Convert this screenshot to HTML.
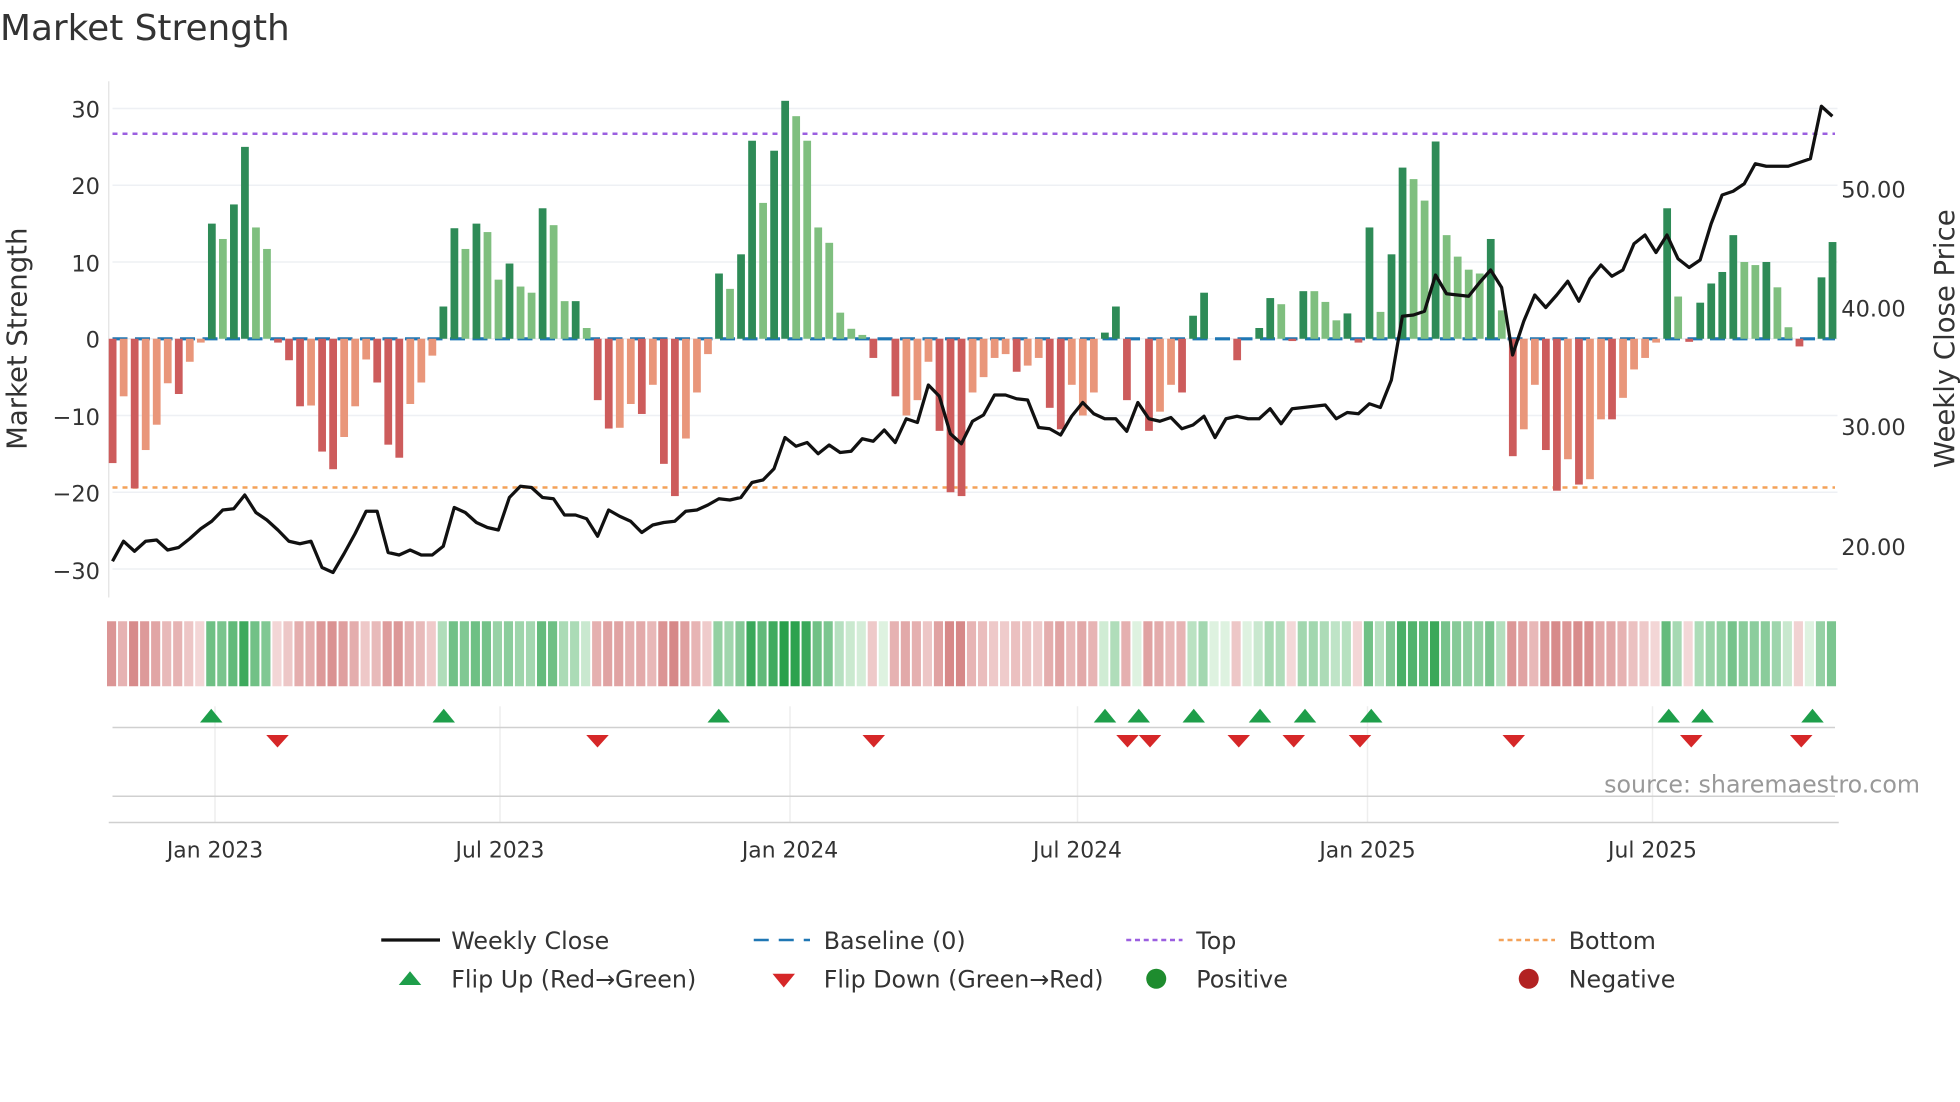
<!DOCTYPE html>
<html><head><meta charset="utf-8"><style>
html,body{margin:0;padding:0;background:#fff;}
svg{display:block;font-family:"DejaVu Sans","Liberation Sans",sans-serif;}
</style></head><body>
<svg id="s" width="1960" height="1102" viewBox="0 0 1568 881.6" xmlns="http://www.w3.org/2000/svg">
<rect width="1568" height="882" fill="#fff"/>
<text x="0" y="32" font-size="28.7" fill="#333">Market Strength</text>
<g id="grid"></g>
<line x1="87" y1="65" x2="87" y2="478" stroke="#e3e3e3" stroke-width="1"/>
<line x1="90" y1="107" x2="1468" y2="107" stroke="#9b5fe0" stroke-width="2" stroke-dasharray="4,4"/>
<line x1="90" y1="390" x2="1468" y2="390" stroke="#f4a259" stroke-width="2" stroke-dasharray="4,4"/>
<line x1="90" y1="271" x2="1468" y2="271" stroke="#1f77b4" stroke-width="2.5" stroke-dasharray="12,6"/>
<g id="bars"></g>
<polyline id="price" fill="none" stroke="#111" stroke-width="2.6" stroke-linejoin="round"/>
<g id="heat"></g>
<g id="marks"></g>
<g font-size="18" fill="#333" text-anchor="end">
<text x="80" y="94">30</text><text x="80" y="155">20</text><text x="80" y="217">10</text><text x="80" y="278">0</text>
<text x="80" y="340">−10</text><text x="80" y="401">−20</text><text x="80" y="463">−30</text>
</g>
<g font-size="18" fill="#333">
<text x="1473" y="158">50.00</text><text x="1473" y="253">40.00</text><text x="1473" y="348">30.00</text><text x="1473" y="444">20.00</text>
</g>
<text transform="translate(21,271) rotate(-90)" text-anchor="middle" font-size="22" fill="#333">Market Strength</text>
<text transform="translate(1563,271) rotate(-90)" text-anchor="middle" font-size="22" fill="#333">Weekly Close Price</text>
<g font-size="17.5" fill="#333" text-anchor="middle">
<text x="172" y="686">Jan 2023</text><text x="400" y="686">Jul 2023</text><text x="632" y="686">Jan 2024</text>
<text x="862" y="686">Jul 2024</text><text x="1094" y="686">Jan 2025</text><text x="1322" y="686">Jul 2025</text>
</g>
<text x="1536" y="634" font-size="19" fill="#999" text-anchor="end">source: sharemaestro.com</text>
<g font-size="19" fill="#333">
<line x1="305" y1="752" x2="352" y2="752" stroke="#111" stroke-width="2.6"/>
<text x="361" y="759">Weekly Close</text>
<line x1="603" y1="752" x2="648" y2="752" stroke="#1f77b4" stroke-width="2" stroke-dasharray="12,8"/>
<text x="659" y="759">Baseline (0)</text>
<line x1="901" y1="752" x2="946" y2="752" stroke="#9b5fe0" stroke-width="2" stroke-dasharray="4,3"/>
<text x="957" y="759">Top</text>
<line x1="1199" y1="752" x2="1244" y2="752" stroke="#f4a259" stroke-width="2" stroke-dasharray="4,3"/>
<text x="1255" y="759">Bottom</text>
<polygon points="319,788 337,788 328,777" fill="#1e9e4a"/>
<text x="361" y="790">Flip Up (Red→Green)</text>
<polygon points="618,779 636,779 627,790" fill="#d62728"/>
<text x="659" y="790">Flip Down (Green→Red)</text>
<circle cx="925" cy="783" r="8" fill="#1e8c2e"/>
<text x="957" y="790">Positive</text>
<circle cx="1223" cy="783" r="8" fill="#b22222"/>
<text x="1255" y="790">Negative</text>
</g>
</svg>
<script>
var NS="http://www.w3.org/2000/svg";
function el(t,a,p){var e=document.createElementNS(NS,t);for(var k in a)e.setAttribute(k,a[k]);document.getElementById(p).appendChild(e);return e;}
[30,20,10,0,-10,-20,-30].forEach(function(v){var y=271-v*6.14;el("line",{x1:90,x2:1470,y1:y,y2:y,stroke:"#eef0f4","stroke-width":1.2},"grid");});
[172,400,632,862,1094,1322].forEach(function(x){el("line",{x1:x,x2:x,y1:565,y2:658,stroke:"#eeeeee","stroke-width":1.2},"grid");});
el("line",{x1:90,x2:1468,y1:582,y2:582,stroke:"#d0d0d0","stroke-width":1.2},"grid");
el("line",{x1:90,x2:1468,y1:637,y2:637,stroke:"#d0d0d0","stroke-width":1.2},"grid");
el("line",{x1:87,x2:1471,y1:658,y2:658,stroke:"#d0d0d0","stroke-width":1.2},"grid");
var V="-16.2d,-7.5,-19.5d,-14.5,-11.2,-5.8,-7.2d,-3,-0.5,15d,13,17.5d,25d,14.5,11.7,-0.5d,-2.8d,-8.8d,-8.7,-14.7d,-17d,-12.8,-8.8,-2.7,-5.7d,-13.8d,-15.5d,-8.5,-5.7,-2.2,4.2d,14.4d,11.7,15d,13.9,7.7,9.8d,6.8,6,17d,14.8,4.9,4.9d,1.4,-8d,-11.7d,-11.6,-8.5,-9.8d,-6,-16.3d,-20.5d,-13,-7,-2,8.5d,6.5,11d,25.8d,17.7,24.5d,31d,29,25.8,14.5,12.5,3.4,1.3,0.5,-2.5d,0,-7.5d,-10,-8,-3,-12d,-20d,-20.5d,-7,-5,-2.5,-2,-4.3d,-3.5,-2.5,-9d,-11.8d,-6,-10,-7,0.8d,4.2d,-8d,0,-12d,-9.5,-6,-7d,3d,6d,0,0,-2.8d,0,1.4d,5.3d,4.5,-0.3d,6.2d,6.2,4.8,2.4,3.3d,-0.5d,14.5d,3.5,11d,22.3d,20.8,18,25.7d,13.5,10.7,9,8.5,13d,3.7,-15.3d,-11.8,-6,-14.5d,-19.8d,-15.7,-19d,-18.3,-10.5,-10.5d,-7.7,-4,-2.5,-0.5,17d,5.5,-0.4d,4.7d,7.2d,8.7d,13.5d,10,9.6,10d,6.7,1.5,-1d,0,8d,12.6d".split(",");
var P=[449,433,441,433,432,440,438,431,423,417,408,407,396,410,416,424,433,435,433,454,458,443,427,409,409,442,444,440,444,444,437,406,410,418,422,424,398,389,390,398,399,412,412,415,429,408,413,417,426,420,418,417,409,408,404,399,400,398,386,384,375,350,357,354,363,356,362,361,351,353,344,354,335,338,308,317,347,355,337,332,316,316,319,320,342,343,348,333,322,331,335,335,345,322,335,337,334,343,340,333,350,335,333,335,335,327,339,327,326,325,324,335,330,331,323,326,304,253,252,249,220,235,236,237,226,216,230,284,257,236,246,236,225,241,223,212,221,216,195,188,202,188,207,214,208,179,156,153,147,131,133,133,133,130,127,85,93];
var pts=[];
function mix(a,b,t){return "rgb("+[0,1,2].map(function(i){return Math.round(a[i]+(b[i]-a[i])*t);}).join(",")+")";}
V.forEach(function(s,i){
  var d=s.indexOf("d")>=0,v=parseFloat(s),x=90+i*8.82;
  if(v!==0){var y=271-v*6.14;
    var c=v>0?(d?"#2e8b57":"#7fbf7f"):(d?"#cd5c5c":"#e9967a");
    el("rect",{x:x-3,y:Math.min(y,271),width:6.2,height:Math.max(Math.abs(v*6.14),1.5),fill:c},"bars");}
  var t=Math.min(Math.abs(v)/30,1);
  var hc=v>=0?mix([222,242,224],[40,160,75],Math.pow(t,0.7)):mix([245,220,220],[205,110,110],Math.pow(t,0.7));
  el("rect",{x:x-4.4,y:497,width:7.3,height:52,fill:hc},"heat");
  if(P[i]!==undefined)pts.push(x.toFixed(1)+","+P[i]);
});
document.getElementById("price").setAttribute("points",pts.join(" "));
[169,355,575,884,911,955,1008,1044,1097,1335,1362,1450].forEach(function(x){el("polygon",{points:(x-9)+",578 "+(x+9)+",578 "+x+",567",fill:"#1e9e4a"},"marks");});
[222,478,699,902,920,991,1035,1088,1211,1353,1441].forEach(function(x){el("polygon",{points:(x-9)+",588 "+(x+9)+",588 "+x+",598",fill:"#d62728"},"marks");});
</script>
</body></html>
